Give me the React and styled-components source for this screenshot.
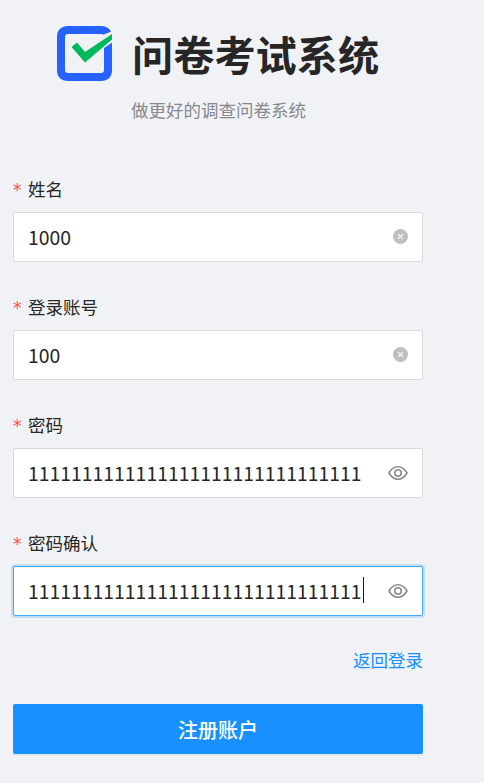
import React from "react";
import styled, { createGlobalStyle } from "styled-components";

const GlobalStyle = createGlobalStyle`
  html, body {
    margin: 0;
    padding: 0;
    background: #f0f2f5;
  }
  body {
    font-family: "Noto Sans CJK SC", "Noto Sans", sans-serif;
  }
`;

const Page = styled.div`
  width: 484px;
  height: 783px;
  box-sizing: border-box;
  padding: 0 61px 0 13px;
  overflow: hidden;
`;

const Header = styled.div`
  padding-top: 25px;
  height: 177px;
  box-sizing: border-box;
`;

const Brand = styled.div`
  display: flex;
  align-items: center;
  gap: 19px;
  margin-left: 44px;
  height: 56px;
`;

const Title = styled.h1`
  margin: 0;
  font-size: 41.200px;
  line-height: 56px;
  font-weight: 700;
  color: #262626;
`;

const Subtitle = styled.div`
  margin: 17px 0 0 118px;
  font-size: 17.500px;
  line-height: 24px;
  color: #86898f;
`;

const Field = styled.div`
  height: 118px;
`;

const Label = styled.div`
  display: flex;
  align-items: center;
  height: 22px;
  margin-bottom: 13px;
  font-size: 17.500px;
  color: #262626;
`;

const Star = styled.span`
  color: #ff4d4f;
  font-family: "DejaVu Sans", sans-serif;
  font-size: 17px;
  width: 15px;
  padding-top: 3px;
`;

const InputBox = styled.div`
  display: flex;
  align-items: center;
  height: 50px;
  box-sizing: border-box;
  padding: 0 14px;
  background: #fff;
  border-radius: 2px;
  border: 1px solid ${(p) => (p.$focused ? "#40a9ff" : "#d9d9d9")};
  box-shadow: ${(p) => (p.$focused ? "0 0 0 2px rgba(24, 144, 255, 0.2)" : "none")};
`;

const Value = styled.span`
  flex: 1;
  display: flex;
  align-items: center;
  padding-bottom: 2px;
  font-size: 19.400px;
  color: #262626;
`;

const Caret = styled.i`
  width: 1px;
  height: 26px;
  margin-left: 1px;
  background: #1a1a1a;
`;

const ClearIcon = styled.svg`
  width: 15px;
  height: 15px;
  margin-bottom: 2px;
`;

const EyeIcon = styled.svg`
  width: 20px;
  height: 20px;
`;

const LinkRow = styled.div`
  display: flex;
  justify-content: flex-end;
  margin-top: -1px;
  height: 56px;
`;

const BackLink = styled.a`
  font-size: 17.500px;
  line-height: 24px;
  color: #1890ff;
  text-decoration: none;
`;

const Submit = styled.button`
  display: block;
  width: 100%;
  height: 50px;
  border: 0;
  border-radius: 2px;
  background: #1890ff;
  color: #fff;
  font-family: inherit;
  font-size: 20px;
  font-weight: 500;
  box-shadow: 0 2px 0 rgba(0, 0, 0, 0.045);
`;

const Logo = () => (
  <svg width="56" height="56" viewBox="0 0 56 56">
    <path
      fill="#2662ff"
      fillRule="evenodd"
      d="M11 1h33c7 0 11 4 11 11v33c0 7-4 11-11 11H11C4 56 0 52 0 45V12C0 5 4 1 11 1zm0 8c-2 0-3 1-3 3v33c0 2 1 3 3 3h33c2 0 3-1 3-3V12c0-2-1-3-3-3z"
    />
    <path fill="#f0f2f5" d="M40 12L56 6v11l-9 6z" />
    <path fill="#00b85c" d="M14.500 22l5.500-4.500L28 27 55 9v5.500L28 37.500z" />
  </svg>
);

const Clear = () => (
  <ClearIcon viewBox="0 0 14 14">
    <circle cx="7" cy="7" r="7" fill="#bfbfbf" />
    <path d="M4.800 4.800l4.400 4.400M9.200 4.800L4.800 9.200" stroke="#fff" strokeWidth="1.100" />
  </ClearIcon>
);

const Eye = () => (
  <EyeIcon viewBox="0 0 20 20" fill="none" stroke="#8c8c8c">
    <path strokeWidth="1.600" d="M1 10c2.200-4 5.200-6.200 9-6.200s6.800 2.200 9 6.200c-2.200 4-5.200 6.200-9 6.200S3.200 14 1 10z" />
    <circle cx="10" cy="10" r="3.200" strokeWidth="1.600" />
  </EyeIcon>
);

const ones = "1111111111111111111111111111111";

const fields = [
  { label: "姓名", value: "1000", icon: <Clear /> },
  { label: "登录账号", value: "100", icon: <Clear /> },
  { label: "密码", value: ones, icon: <Eye /> },
  { label: "密码确认", value: ones, icon: <Eye />, focused: true },
];

const App = () => (
  <Page>
    <GlobalStyle />
    <Header>
      <Brand>
        <Logo />
        <Title>问卷考试系统</Title>
      </Brand>
      <Subtitle>做更好的调查问卷系统</Subtitle>
    </Header>
    {fields.map((field) => (
      <Field key={field.label}>
        <Label>
          <Star>*</Star>
          {field.label}
        </Label>
        <InputBox $focused={field.focused}>
          <Value>
            {field.value}
            {field.focused && <Caret />}
          </Value>
          {field.icon}
        </InputBox>
      </Field>
    ))}
    <LinkRow>
      <BackLink href="#">返回登录</BackLink>
    </LinkRow>
    <Submit type="button">注册账户</Submit>
  </Page>
);

export default App;
